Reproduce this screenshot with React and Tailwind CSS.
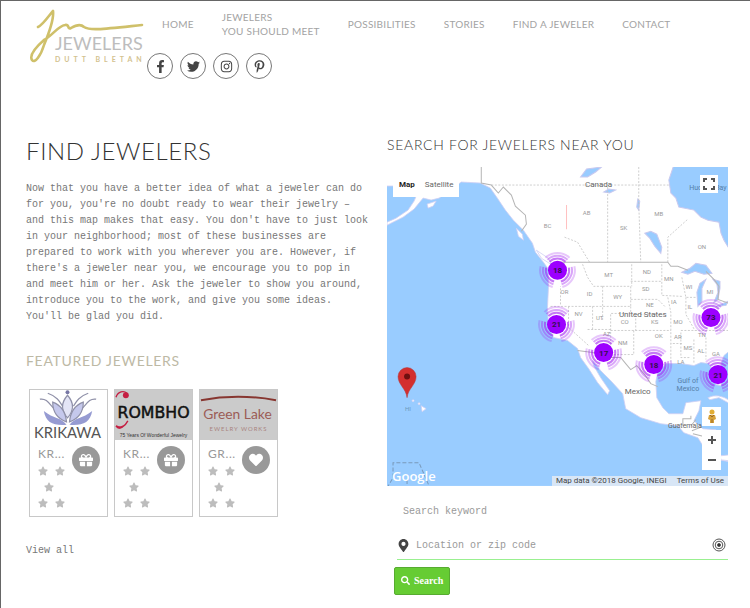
import { FaFacebookF, FaTwitter, FaPinterestP, FaGift, FaHeart, FaStar, FaMapMarkerAlt, FaSearch, FaInstagram } from "react-icons/fa";

const navigation = [
  { name: "Home" },
  { name: "Jewelers", second: "You should meet" },
  { name: "Possibilities" },
  { name: "Stories" },
  { name: "Find a jeweler" },
  { name: "Contact" },
];

const socials = [
  { name: "Facebook", Icon: FaFacebookF },
  { name: "Twitter", Icon: FaTwitter },
  { name: "Instagram", Icon: FaInstagram },
  { name: "Pinterest", Icon: FaPinterestP },
];

const mapLabels = [
  ["BC", 160, 59], ["AB", 199, 46], ["SK", 236, 61], ["MB", 271, 47], ["ON", 314, 80],
  ["MT", 221, 108], ["ND", 259, 105], ["SD", 258, 122], ["MN", 281, 112], ["WI", 301, 120],
  ["MI", 322, 125], ["OR", 177, 125], ["ID", 202, 127], ["WY", 230, 130], ["NE", 262, 138],
  ["IA", 286, 135], ["IL", 302, 140], ["NV", 191, 147], ["UT", 212, 151], ["CO", 237, 155],
  ["KS", 267, 155], ["MO", 290, 155], ["AZ", 219, 167], ["NM", 235, 175], ["OK", 271, 169],
  ["AR", 290, 170], ["TN", 314, 168], ["MS", 300, 180], ["AL", 313, 183], ["GA", 328, 186],
  ["LA", 293, 194],
];

const clusters = [
  { count: 18, x: 170, y: 103 },
  { count: 21, x: 169, y: 157 },
  { count: 17, x: 216, y: 185 },
  { count: 18, x: 266, y: 197 },
  { count: 73, x: 323, y: 150 },
  { count: 21, x: 330, y: 207 },
];

function Logo() {
  return (
    <svg viewBox="0 0 118 60" className="h-15 w-[118px]" role="img" aria-label="Jewelers">
      <path
        d="M9 20C14 18 21 7 24 4C25 11 20 26 15 38C12 48 6 57 3 53C0 48 7 40 15 33C24 28 29 19 36 18C41 17 38 23 42 21C47 18 52 17 55 20C61 24 75 22 113 18"
        fill="none"
        stroke="#cfc06a"
        strokeWidth="2.6"
        strokeLinecap="round"
        strokeLinejoin="round"
      />
      <text x="26" y="43" fontSize="18" fill="#bdbdbd" fontFamily="Lato, sans-serif">JEWELERS</text>
      <text x="26" y="55" fontSize="7" fill="#d3c28f" fontFamily="Lato, sans-serif" fontWeight="700" className="tracking-[4px]">DUTT BLETAN</text>
    </svg>
  );
}

function Header() {
  return (
    <header className="flex items-start pl-7 pr-5 pt-1.5">
      <a href="#" className="shrink-0">
        <Logo />
      </a>
      <div>
        <nav className="flex h-[34px] items-center gap-7 pl-[15px] text-[10px] uppercase leading-[14px] tracking-wide text-[#a3a3a3]">
          {navigation.map((item) => (
            <a key={item.name} href="#" className="whitespace-nowrap">
              {item.name}
              {item.second && <span className="block">{item.second}</span>}
            </a>
          ))}
        </nav>
        <div className="mt-3 flex gap-[7px]">
          {socials.map(({ name, Icon }) => (
            <a
              key={name}
              href="#"
              aria-label={name}
              className="flex size-[26px] items-center justify-center rounded-full border border-[#777] text-[#444]"
            >
              <Icon size={13} />
            </a>
          ))}
        </div>
      </div>
    </header>
  );
}

function KrikawaLogo() {
  return (
    <svg viewBox="0 0 78 50" className="block h-[50px] w-full">
      <g fill="none" stroke="#8f90a8" strokeWidth="1.2">
        <path d="M10 9C20 7 22 22 34 25M67 9C57 7 55 22 43 25M18 3C27 6 30 11 33 16M59 3C50 6 47 11 44 16" />
        <path d="M38 5C31 13 31 20 38 28C45 20 45 13 38 5Z" fill="#e4e5f6" />
        <path d="M23 12C23 23 29 29 37 32C36 21 31 15 23 12ZM54 12C54 23 48 29 40 32C41 21 46 15 54 12Z" fill="#c5c8ec" />
      </g>
      <path d="M14 21C16 33 24 36 37 35C31 27 24 29 14 21ZM63 21C61 33 53 36 40 35C46 27 53 29 63 21Z" fill="#969bd2" />
      <circle cx="38" cy="2" r="2" fill="#7777a5" />
      <text x="38" y="48" textAnchor="middle" fontSize="15" fill="#555" fontFamily="Lato, sans-serif">KRIKAWA</text>
    </svg>
  );
}

function KrombholzLogo() {
  return (
    <svg viewBox="0 0 78 50" className="block h-[50px] w-full bg-[#cbcbcb]">
      <path d="M1 7C3 1 9 0 12 3M1 36C4 41 10 37 13 31" fill="none" stroke="#c51e42" strokeWidth="1.4" />
      <circle cx="11" cy="5" r="3" fill="#c51e42" />
      <path d="M1 35C3 37 7 37 9 35C7 40 2 40 1 35Z" fill="#c51e42" />
      <text x="39" y="28" textAnchor="middle" fontSize="16" fill="#111" fontFamily="'DejaVu Sans', sans-serif" stroke="#111" strokeWidth="0.5">ROMBHO</text>
      <text x="39" y="47" textAnchor="middle" fontSize="5" fill="#333" fontFamily="'Liberation Sans', sans-serif">75 Years Of Wonderful Jewelry</text>
    </svg>
  );
}

function GreenLakeLogo() {
  return (
    <svg viewBox="0 0 78 50" className="block h-[50px] w-full bg-[#cbcbcb]">
      <path d="M1 10Q38 3 77 10" fill="none" stroke="#873630" strokeWidth="2" />
      <text x="38" y="29" textAnchor="middle" fontSize="14" fill="#9b5b55" fontFamily="Lato, sans-serif">Green Lake</text>
      <text x="39" y="41" textAnchor="middle" fontSize="6" fill="#a98480" fontFamily="Lato, sans-serif" className="tracking-[1px]">EWELRY WORKS</text>
    </svg>
  );
}

const jewelers = [
  { name: "KR...", Picture: KrikawaLogo, Icon: FaGift, action: "Gift" },
  { name: "KR...", Picture: KrombholzLogo, Icon: FaGift, action: "Gift" },
  { name: "GR...", Picture: GreenLakeLogo, Icon: FaHeart, action: "Favorite" },
];

function Stars() {
  return (
    <div className="grid gap-1.5 text-[#bdbdbd]">
      <div className="flex gap-[7px]">
        <FaStar size={10} />
        <FaStar size={10} />
      </div>
      <div className="pl-1.5">
        <FaStar size={10} />
      </div>
      <div className="flex gap-[7px]">
        <FaStar size={10} />
        <FaStar size={10} />
      </div>
    </div>
  );
}

function JewelerCard({ jeweler }) {
  const { name, Picture, Icon, action } = jeweler;
  return (
    <article className="w-[79px] overflow-hidden border border-[#c8c8c8]">
      <Picture />
      <div className="flex justify-between pb-2 pl-2 pr-[7px] pt-1.5">
        <div>
          <h3 className="mb-1 text-xs leading-4 tracking-wider text-[#999]">{name}</h3>
          <Stars />
        </div>
        <button
          type="button"
          aria-label={action}
          className="flex size-7 items-center justify-center rounded-full bg-[#999] text-white"
        >
          <Icon size={14} />
        </button>
      </div>
    </article>
  );
}

function Cluster({ count, x, y }) {
  return (
    <g transform={`translate(${x} ${y})`}>
      <g fill="none" strokeWidth="2" stroke="#a020f0">
        {/* three groups of arcs around the disc */}
        {[0, 120, 240].map((angle) => (
          <g key={angle} transform={`rotate(${angle})`}>
            <path d="M-8 -8.5A11.7 11.7 0 0 1 8 -8.5" opacity="0.6" />
            <path d="M-10 -10.5A14.5 14.5 0 0 1 10 -10.5" opacity="0.4" />
            <path d="M-12 -12.5A17.3 17.3 0 0 1 12 -12.5" opacity="0.25" />
          </g>
        ))}
      </g>
      <circle r="9.5" fill="#9c00ff" />
      <text y="3" textAnchor="middle" fontSize="8" fontWeight="700" fill="#35104f">{count}</text>
    </g>
  );
}

function MapDrawing() {
  return (
    <svg
      viewBox="0 0 340 318"
      preserveAspectRatio="xMidYMid slice"
      className="block aspect-[340/318] w-full"
      fontFamily="Roboto, sans-serif"
    >
      <rect width="340" height="318" fill="#99ccff" />
      <g fill="#fff" stroke="#cfcff4" strokeWidth="0.8">
        <path d="M-2 -2H342V183L336 188L333 196L335 210L333 218L328 217L326 207L321 196L313 195L306 198L293 196L278 196L270 205L268 214L269 230L275 240L281 246L295 246L298 235L313 233L311 243L306 253L315 261L328 262L326 276L330 287L342 290V294L326 291L315 278L310 270L296 265L290 258L273 256L253 250L238 241L235 226L223 213L213 203L205 193L206 198L213 210L222 223L220 227L210 215L201 201L193 190L190 181L180 173L166 170L161 158L160 140L161 120L161 102L156 95L148 85L145 76L136 63L126 53L118 43L110 31L103 21L93 16L74 15L62 24L52 31L44 33L36 31L27 42L16 50L8 54L0 58V55L9 51L21 43L27 34L30 27L8 19H-2Z" />
        <path d="M129 61L135 67L136 73L131 69ZM149 83L161 91L165 98L154 91ZM40 37L49 34L46 39L41 41Z" />
        <path d="M320 230Q330 225 342 233L340 235L331 230L322 232ZM332 288L342 287V293L333 292Z" />
        <circle cx="26" cy="233" r="1" />
        <circle cx="32" cy="236" r="1" />
        <path d="M34 238L39 241L35 244Z" />
      </g>
      <g fill="#99ccff" stroke="#c9c9ef" strokeWidth="1">
        <path d="M286 -2L281 13L283 26L288 31L291 40L306 43L313 50L320 53L331 55L333 66L336 73L342 83V-2Z" />
        <path d="M193 10L199 2L214 0L208 5L200 10ZM216 25L221 22L228 23L222 26Z" />
        <path d="M257 66L263 64L269 67L274 80L273 86L267 79L262 71ZM250 32L252 34L251 43L249 40Z" />
        <path d="M294 105L302 101L308 96L318 98L324 106L316 107L307 104L300 107Z" />
        <path d="M312 116L318 112L314 121L314 134L310 139L309 125ZM325 112L332 114L332 121L330 132L326 135L330 125L329 117Z" />
        <path d="M328 139L340 134L338 138Z" />
      </g>
      <g fill="none" stroke="#b5b5b5" strokeWidth="1">
        <path d="M94 0V16L104 18L111 26L116 20L124 28L128 39L138 48L139 57L134 64" />
        <path d="M174 95H280L283 99L290 99L300 103M318 104L326 112L331 119L330 132L341 136" />
        <path d="M190 183L205 185L219 190L233 190L238 196L243 202L249 198L257 207L263 216L270 219" />
        <path d="M295 258V251H303V248M303 258L308 252M304 263L314 259M305 266L317 269" />
      </g>
      <g fill="none" stroke="#c3c3c3" strokeWidth="0.8" strokeDasharray="2 1.5">
        <path d="M104 18H282M220 20V95M251 0V18V36L253 95M280 95V70L300 52M177 70L190 75L202 95" />
        <path d="M195 97L200 110L206 119H215M163 139H215M215 119V153M215 119H243V139H215M244 97V119M243 114H274M274 97V128L294 129M243 132H270L278 140M243 139V146H223V187M223 163H283M280 130L283 145V194M205 139V163M181 139V160L201 178M200 162H223M246 163V187H223M272 147H248V163M298 130V147L307 163M293 163H340M294 176H283M306 172V195M318 170V192M294 110L298 130H309M293 165V190H303" />
        <path d="M173 137V119" />
      </g>
      <path d="M179 38V62" stroke="#ffc0c0" />
      <path d="M0 320L6 310V295H32L42 318M20 312V318" fill="none" stroke="#7999ba" strokeDasharray="4 2" />

      <g fontSize="6" fill="#999" textAnchor="middle">
        {mapLabels.map(([name, x, y]) => (
          <text key={name} x={x} y={y + 2}>{name}</text>
        ))}
        <text x="21" y="243" fill="#6c9abb">HI</text>
      </g>
      <g fontSize="8" fill="#666" textAnchor="middle">
        <text x="211" y="20">Canada</text>
        <text x="255" y="150">United States</text>
        <text x="250" y="226">Mexico</text>
        <g fontSize="7" fill="#557fa8">
          <text x="320" y="23">Hudson Bay</text>
          <text x="300" y="215">Gulf of</text>
          <text x="300" y="223">Mexico</text>
        </g>
        <text x="297" y="260" fontSize="7">Guatemala</text>
      </g>

      {clusters.map((cluster) => (
        <Cluster key={`${cluster.x}-${cluster.y}`} {...cluster} />
      ))}

      <path d="M20 230C19 221 11 217 11 209A9 9 0 0 1 29 209C29 217 21 221 20 230Z" fill="#d32f2f" stroke="#b63535" strokeWidth="0.5" />
      <circle cx="20" cy="209" r="3" fill="#6e1010" />
      <text x="5" y="313" fontSize="13" fill="#fff" fontWeight="600" fontFamily="'Open Sans', sans-serif">Google</text>
    </svg>
  );
}

function JewelerMap() {
  return (
    <div className="relative mt-3 overflow-hidden font-['Roboto',sans-serif]">
      <MapDrawing />
      <div className="absolute left-1.5 top-1.5 flex h-6 items-center gap-2.5 bg-white px-1.5 text-[8px]">
        <button type="button" className="font-bold text-[#222]">Map</button>
        <button type="button" className="text-[#666]">Satellite</button>
      </div>
      <button
        type="button"
        aria-label="Full screen"
        className="absolute right-2.5 top-2 flex size-[18px] items-center justify-center bg-white"
      >
        <svg viewBox="0 0 12 12" className="size-3" fill="none" stroke="#555" strokeWidth="2">
          <path d="M1 4V1H4M8 1H11V4M11 8V11H8M4 11H1V8" />
        </svg>
      </button>
      <div className="absolute bottom-4 right-[7px] grid gap-1">
        <button type="button" aria-label="Street view" className="flex size-[19px] items-center justify-center bg-white">
          <svg viewBox="0 0 10 14" className="h-3.5 w-2.5">
            <circle cx="5" cy="3" r="2.5" fill="#e1ad35" />
            <path d="M2 6H8L9 10L7 11V14H3V11L1 10Z" fill="#d5a13b" />
            <path d="M3 6L5 8L7 6M5 10V14" stroke="#9b6828" fill="none" />
          </svg>
        </button>
        <div className="grid w-[19px] bg-white">
          <button type="button" aria-label="Zoom in" className="flex h-5 items-center justify-center">
            <svg viewBox="0 0 8 8" className="size-2" stroke="#555" strokeWidth="2">
              <path d="M4 0V8M0 4H8" />
            </svg>
          </button>
          <button type="button" aria-label="Zoom out" className="flex h-5 items-center justify-center">
            <svg viewBox="0 0 8 8" className="size-2" stroke="#555" strokeWidth="2">
              <path d="M0 4H8" />
            </svg>
          </button>
        </div>
      </div>
      <div className="absolute bottom-0 right-0 flex gap-2.5 bg-[#d8e6f6] px-1 text-[8px] leading-[10px] text-[#444]">
        <span>Map data ©2018 Google, INEGI</span>
        <a href="#">Terms of Use</a>
      </div>
    </div>
  );
}

function SearchForm() {
  return (
    <form className="font-['Liberation_Mono',monospace] text-[10px] leading-4">
      <div className="px-4 pt-4">
        <input
          type="text"
          aria-label="Search keyword"
          placeholder="Search keyword"
          className="h-5 w-full outline-none placeholder:text-[#999]"
        />
      </div>
      <div className="ml-2.5 mt-2.5 flex h-7 items-center gap-1.5 border-b border-[#99f090]">
        <FaMapMarkerAlt size={13} className="shrink-0 text-[#444]" />
        <input
          type="text"
          aria-label="Location or zip code"
          placeholder="Location or zip code"
          className="h-5 min-w-0 flex-1 outline-none placeholder:text-[#999]"
        />
        <button type="button" aria-label="Use my location" className="pr-0.5">
          <svg viewBox="0 0 14 14" className="size-3.5" fill="none" stroke="#555">
            <circle cx="7" cy="7" r="6" />
            <circle cx="7" cy="7" r="3.8" />
            <circle cx="7" cy="7" r="1.5" fill="#222" />
          </svg>
        </button>
      </div>
      <button
        type="submit"
        className="ml-[7px] mt-[7px] flex h-7 items-center gap-1 rounded-xs border border-[#57ab30] bg-[#66cc33] px-1.5 font-['Liberation_Serif',serif] text-[10px] font-bold text-white"
      >
        <FaSearch size={9} />
        Search
      </button>
    </form>
  );
}

export default function App() {
  return (
    <div className="min-h-screen border-l border-t border-[#666] bg-white font-['Lato',sans-serif]">
      <Header />
      <main className="grid grid-cols-[343fr_341fr] gap-[18px] pb-3 pl-[25px] pr-[22px] pt-14">
        <section>
          <h1 className="text-2xl font-light leading-8 tracking-wide text-[#333]">FIND JEWELERS</h1>
          <p className="mt-3.5 font-['Liberation_Mono',monospace] text-[10px] leading-4 text-[#777]">
            Now that you have a better idea of what a jeweler can do
            <br />
            for you, you're no doubt ready to wear their jewelry –
            <br />
            and this map makes that easy. You don't have to just look
            <br />
            in your neighborhood; most of these businesses are
            <br />
            prepared to work with you wherever you are. However, if
            <br />
            there's a jeweler near you, we encourage you to pop in
            <br />
            and meet him or her. Ask the jeweler to show you around,
            <br />
            introduce you to the work, and give you some ideas.
            <br />
            You'll be glad you did.
          </p>
          <h2 className="mt-[26px] text-sm leading-5 tracking-wider text-[#bdb9a5]">FEATURED JEWELERS</h2>
          <div className="mt-[18px] flex gap-1.5 pl-[3px]">
            {jewelers.map((jeweler, i) => (
              <JewelerCard key={i} jeweler={jeweler} />
            ))}
          </div>
          <a href="#" className="mt-[26px] inline-block font-['Liberation_Mono',monospace] text-[10px] leading-4 text-[#777]">
            View all
          </a>
        </section>
        <section>
          <h2 className="text-sm font-light leading-5 tracking-wider text-[#333]">SEARCH FOR JEWELERS NEAR YOU</h2>
          <JewelerMap />
          <SearchForm />
        </section>
      </main>
    </div>
  );
}
